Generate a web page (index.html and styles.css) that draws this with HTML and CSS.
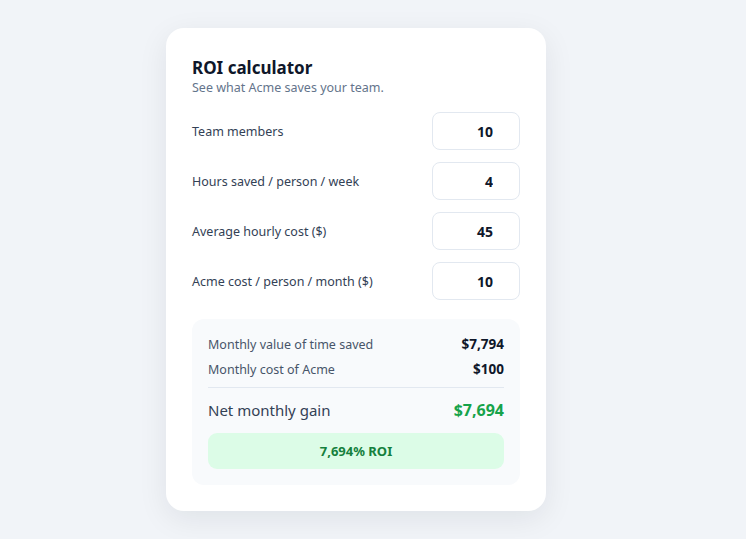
FILE: index.html
```html
<!DOCTYPE html>
<html lang="en">
<head>
	<meta charset="UTF-8">
	<title>ROI calculator</title>
	<link rel="stylesheet" href="styles.css">
</head>
<body>
	<div class="card">
		<h1 class="title">ROI calculator</h1>
		<p class="sub">See what Acme saves your team.</p>
		<div class="fields">
			<label class="field">
				<span>Team members</span>
				<input type="text" value="10">
			</label>
			<label class="field">
				<span>Hours saved / person / week</span>
				<input type="text" value="4">
			</label>
			<label class="field">
				<span>Average hourly cost ($)</span>
				<input type="text" value="45">
			</label>
			<label class="field">
				<span>Acme cost / person / month ($)</span>
				<input type="text" value="10">
			</label>
		</div>
		<div class="summary">
			<div class="line">
				<span>Monthly value of time saved</span>
				<b>$7,794</b>
			</div>
			<div class="line">
				<span>Monthly cost of Acme</span>
				<b>$100</b>
			</div>
			<div class="line net">
				<span>Net monthly gain</span>
				<b>$7,694</b>
			</div>
			<div class="roi">7,694% ROI</div>
		</div>
	</div>
</body>
</html>
```

FILE: styles.css
```css
*{
	margin: 0;
	padding: 0;
	box-sizing: border-box;
}
html{
	background-color: #f1f4f8;
}
body{
	min-height: 100vh;
	font-family: "Noto Sans", "Open Sans", sans-serif;
	color: #334155;
	padding: 28px 0 0 166px;
}
.card{
	width: 380px;
	padding: 28px 26px 26px;
	background-color: #fff;
	border-radius: 18px;
	box-shadow: 0 8px 30px rgba(15, 23, 42, 0.08);
}
.title{
	font-size: 17px;
	line-height: 24px;
	font-weight: 700;
	color: #0f172a;
}
.sub{
	font-size: 12.5px;
	line-height: 16px;
	color: #64748b;
}
.fields{
	margin-top: 16px;
	display: flex;
	flex-direction: column;
	gap: 12px;
}
.field{
	display: flex;
	justify-content: space-between;
	align-items: center;
	font-size: 12.5px;
	color: #334155;
}
.field input{
	width: 88px;
	height: 38px;
	border: 1px solid #e2e8f0;
	border-radius: 8px;
	padding-right: 26px;
	text-align: right;
	font-family: inherit;
	font-size: 14px;
	font-weight: 700;
	color: #0f172a;
	background-color: #fff;
	outline: none;
}
.summary{
	margin-top: 19px;
	padding: 13px 16px 16px;
	background-color: #f8fafc;
	border-radius: 12px;
}
.line{
	display: flex;
	justify-content: space-between;
	align-items: center;
	font-size: 12.5px;
	line-height: 25px;
	color: #475569;
}
.line b{
	color: #0f172a;
	font-size: 13.5px;
}
.line.net{
	margin-top: 5px;
	padding-top: 9px;
	border-top: 1px solid #e2e8f0;
	font-size: 15px;
	line-height: 26px;
	color: #334155;
}
.line.net b{
	font-size: 16px;
	color: #16a34a;
}
.roi{
	margin-top: 10px;
	height: 36px;
	line-height: 36px;
	text-align: center;
	background-color: #dcfce7;
	border-radius: 9px;
	color: #15803d;
	font-size: 13px;
	font-weight: 700;
}
```
